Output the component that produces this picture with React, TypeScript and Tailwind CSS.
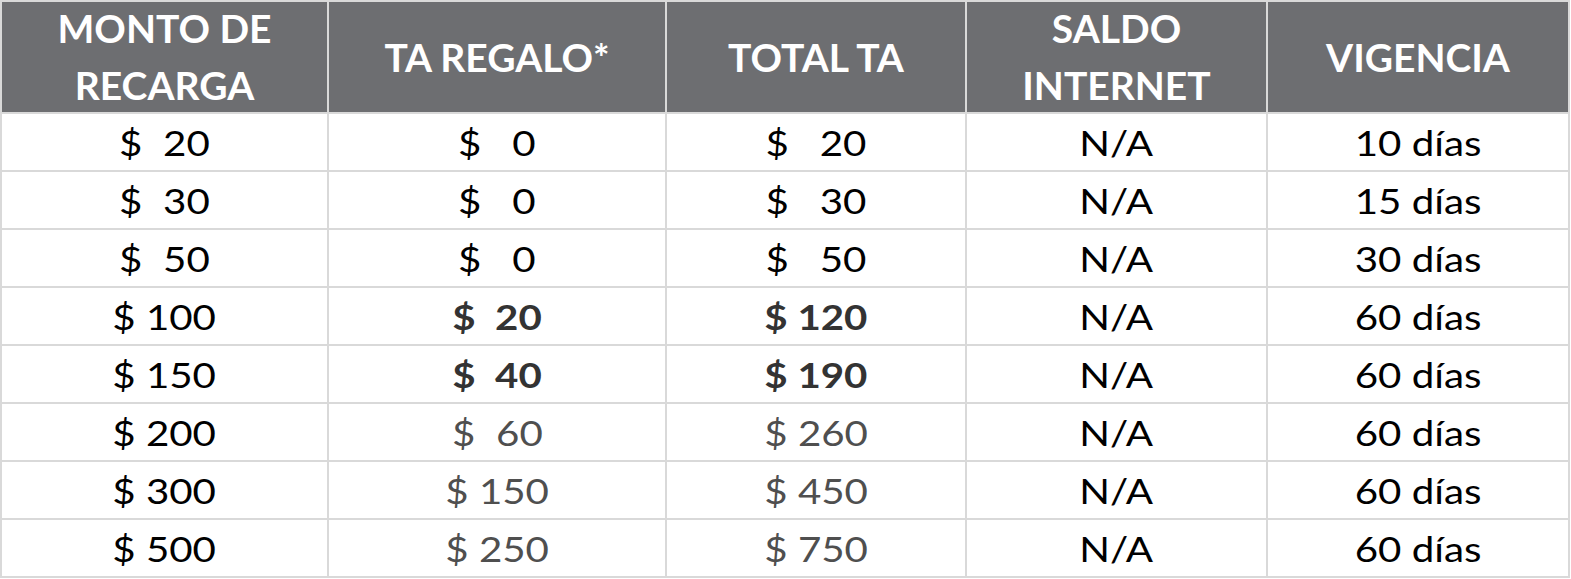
type Tone = 'plain' | 'bold' | 'muted'

interface Row {
  monto: string
  regalo: string
  total: string
  internet: string
  vigencia: string
  tone: Tone
}

const rows: Row[] = [
  { monto: '$  20', regalo: '$   0', total: '$   20', internet: 'N/A', vigencia: '10 días', tone: 'plain' },
  { monto: '$  30', regalo: '$   0', total: '$   30', internet: 'N/A', vigencia: '15 días', tone: 'plain' },
  { monto: '$  50', regalo: '$   0', total: '$   50', internet: 'N/A', vigencia: '30 días', tone: 'plain' },
  { monto: '$ 100', regalo: '$  20', total: '$ 120', internet: 'N/A', vigencia: '60 días', tone: 'bold' },
  { monto: '$ 150', regalo: '$  40', total: '$ 190', internet: 'N/A', vigencia: '60 días', tone: 'bold' },
  { monto: '$ 200', regalo: '$  60', total: '$ 260', internet: 'N/A', vigencia: '60 días', tone: 'muted' },
  { monto: '$ 300', regalo: '$ 150', total: '$ 450', internet: 'N/A', vigencia: '60 días', tone: 'muted' },
  { monto: '$ 500', regalo: '$ 250', total: '$ 750', internet: 'N/A', vigencia: '60 días', tone: 'muted' },
]

const headers = [
  ['MONTO DE', 'RECARGA'],
  ['TA REGALO*'],
  ['TOTAL TA'],
  ['SALDO', 'INTERNET'],
  ['VIGENCIA'],
]

// regalo / total columns change weight and colour with the row
function toneClass(tone: Tone): string {
  if (tone === 'bold') return 'font-bold text-[#333333]'
  if (tone === 'muted') return 'text-[#4f4f4f]'
  return 'text-black'
}

function Cell({ children, className = '' }: { children: React.ReactNode; className?: string }) {
  return (
    <div className={`bg-white flex items-center justify-center whitespace-pre text-[35px] leading-none ${className}`}>
      {/* the sheet's font runs wider than Lato, so stretch it a bit */}
      <span className="inline-block scale-x-[1.15]">{children}</span>
    </div>
  )
}

export default function App() {
  return (
    <div className="w-[1571px] h-[579px] bg-white" style={{ fontFamily: 'Lato, "Open Sans", sans-serif' }}>
      <div className="grid grid-cols-[325px_336px_298px_299px_300px] grid-rows-[110px_repeat(8,56px)] gap-[2px] p-[2px] bg-[#d9d9d9] w-[1570px]">
        {headers.map((lines, i) => (
          <div
            key={i}
            className="bg-[#6d6e71] text-white font-bold text-[39px] leading-[57px] flex flex-col items-center justify-center"
          >
            {lines.map((line) => (
              <span key={line}>{line}</span>
            ))}
          </div>
        ))}
        {rows.map((row) => (
          <>
            <Cell key={row.monto + 'm'} className="text-black">{row.monto}</Cell>
            <Cell key={row.monto + 'r'} className={toneClass(row.tone)}>{row.regalo}</Cell>
            <Cell key={row.monto + 't'} className={toneClass(row.tone)}>{row.total}</Cell>
            <Cell key={row.monto + 'i'} className="text-black">{row.internet}</Cell>
            <Cell key={row.monto + 'v'} className="text-black">{row.vigencia}</Cell>
          </>
        ))}
      </div>
    </div>
  )
}
